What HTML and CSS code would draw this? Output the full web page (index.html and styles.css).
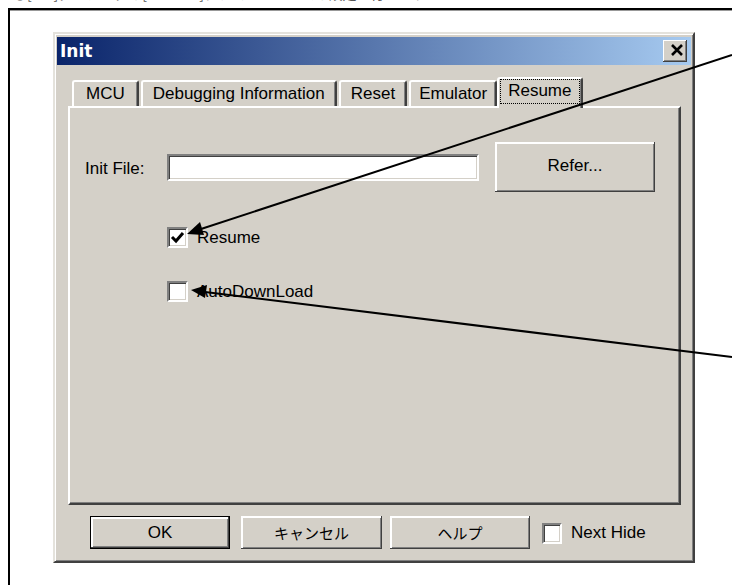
FILE: index.html
```html
<!DOCTYPE html>
<html lang="ja">
    <head>
        <meta charset="UTF-8" />
        <meta name="viewport" content="width=device-width, initial-scale=1.0" />
        <title>Init - Resume</title>
        <link rel="stylesheet" href="styles.css">
    </head>
    <body>
        <p class="caption">●[Init]ダイアログの[Resume]タブでレジュームの設定を行います</p>

        <div class="frame">
            <div class="dialog">
                <div class="titlebar">
                    <span class="title">Init</span>
                    <button class="close-btn" title="Close">
                        <svg width="24" height="22" viewBox="0 0 24 22">
                            <path d="M9 5 L19 15 M19 5 L9 15" stroke="#000" stroke-width="2.6" fill="none" />
                        </svg>
                    </button>
                </div>

                <div class="dialog-body">
                    <div class="tabs">
                        <div class="tab tab-mcu">MCU</div>
                        <div class="tab">Debugging Information</div>
                        <div class="tab">Reset</div>
                        <div class="tab tab-emu">Emulator</div>
                        <div class="tab active"><span class="focus">Resume</span></div>
                    </div>

                    <div class="panel">
                        <div class="file-row">
                            <label class="file-label" for="initFile">Init File:</label>
                            <input class="file-input" type="text" id="initFile" />
                            <button class="btn refer-btn">Refer...</button>
                        </div>

                        <label class="check-row first">
                            <span class="check">
                                <svg width="17" height="17" viewBox="0 0 17 17">
                                    <path d="M3 8 L7 12 L14 4" stroke="#000" stroke-width="3" fill="none" />
                                </svg>
                            </span>
                            Resume
                        </label>
                        <label class="check-row second">
                            <span class="check"></span>
                            AutoDownLoad
                        </label>
                    </div>

                    <div class="button-row">
                        <button class="btn default-btn">OK</button>
                        <button class="btn jp cancel-btn">キャンセル</button>
                        <button class="btn jp help-btn">ヘルプ</button>
                        <label class="check-row next-hide">
                            <span class="check small"></span>
                            Next Hide
                        </label>
                    </div>
                </div>
            </div>
        </div>

        <!-- callout arrows drawn over the dialog -->
        <svg class="callouts" width="732" height="585" viewBox="0 0 732 585">
            <line x1="732" y1="55" x2="201" y2="229" stroke="#000" stroke-width="2" />
            <polygon points="187,234 204,235 200,222" fill="#000" />
            <line x1="732" y1="357" x2="205" y2="292" stroke="#000" stroke-width="2" />
            <polygon points="191,290 207,285 205,298" fill="#000" />
        </svg>
    </body>
</html>
```

FILE: styles.css
```css
body {
    margin: 0;
    background-color: #fff;
    overflow: hidden;
    font-family: "Liberation Sans", "Noto Sans CJK JP", sans-serif;
    font-size: 17px;
    color: #000;
}

/* heading of the page, scrolled mostly out of view */
.caption {
    margin: -17px 0 0 13px;
    height: 20px;
    line-height: 20px;
    font-family: "Noto Sans CJK JP", sans-serif;
    font-size: 14px;
    color: #555;
    white-space: nowrap;
}

.frame {
    margin: 5px 0 0 8px;
    width: 760px;
    height: 620px;
    border: 2px solid #000;
    box-shadow: inset 0 1px #999;
    padding: 22px 0 0 43px;
}

.dialog {
    width: 642px;
    height: 531px;
    box-sizing: border-box;
    background-color: #d4d0c8;
    border: 2px solid;
    border-color: #e4e2dc #404040 #404040 #e4e2dc;
    box-shadow: inset 1px 1px #fff, inset -1px -1px #808080;
    padding: 3px 2px 2px;
    display: flex;
    flex-direction: column;
}

.titlebar {
    height: 28px;
    flex: none;
    display: flex;
    align-items: center;
    justify-content: space-between;
    padding: 0 4px 0 3px;
    background: linear-gradient(to right, #0a246a, #a6caf0);
}

.title {
    color: #fff;
    font-family: "DejaVu Sans", sans-serif;
    font-weight: bold;
    font-size: 17px;
}

.close-btn {
    width: 24px;
    height: 22px;
    padding: 0;
    border: none;
    background-color: #d4d0c8;
    box-shadow: inset -1px -1px #404040, inset 1px 1px #fff, inset -2px -2px #808080;
    display: flex;
}

.dialog-body {
    flex: 1;
    display: flex;
    flex-direction: column;
    padding: 12px 10px 10px 11px;
}

/* tab strip */
.tabs {
    height: 29px;
    flex: none;
    display: flex;
    align-items: flex-end;
    padding-left: 4px;
}

.tab {
    height: 26px;
    box-sizing: border-box;
    display: flex;
    align-items: center;
    padding: 0 10px;
    margin-right: 2px;
    border: 2px solid;
    border-bottom: none;
    border-color: #fff #404040 transparent #fff;
    border-radius: 3px 3px 0 0;
    box-shadow: inset -1px 0 #808080;
    white-space: nowrap;
}

.tab-mcu {
    padding: 0 12px;
}

.tab-emu {
    padding: 0 8px;
}

.tab.active {
    position: relative;
    height: 31px;
    margin: 0 0 -2px -2px;
    padding: 0 1px 4px;
    align-items: flex-end;
    background-color: #d4d0c8;
}

.focus {
    display: flex;
    align-items: center;
    height: 25px;
    box-sizing: border-box;
    padding: 0 7px 2px;
    border: 1px dotted #000;
}

.panel {
    flex: 1;
    border: 2px solid;
    border-color: #fff #404040 #404040 #fff;
    box-shadow: inset -1px -1px #808080;
    padding: 34px 0 0 15px;
}

.file-row {
    display: flex;
    align-items: center;
    height: 50px;
}

.file-label {
    width: 82px;
    padding-top: 4px;
}

.file-input {
    width: 312px;
    height: 27px;
    box-sizing: border-box;
    margin: 0 16px 0 0;
    padding: 0;
    border: 2px solid;
    border-color: #808080 #fff #fff #808080;
    box-shadow: inset 1px 1px #404040, inset -1px -1px #d4d0c8;
    background-color: #fff;
}

.btn {
    font: inherit;
    color: #000;
    background-color: #d4d0c8;
    border: none;
    padding: 0;
    box-shadow: inset -1px -1px #404040, inset 2px 2px #fff, inset -2px -2px #808080;
}

.refer-btn {
    width: 160px;
    height: 50px;
    padding-bottom: 2px;
}

/* checkboxes */
.check-row {
    display: flex;
    align-items: center;
    gap: 9px;
    height: 21px;
}

.check-row.first {
    margin: 35px 0 0 82px;
}

.check-row.second {
    margin: 33px 0 0 82px;
}

.check {
    width: 21px;
    height: 21px;
    box-sizing: border-box;
    display: flex;
    border: 2px solid;
    border-color: #808080 #fff #fff #808080;
    box-shadow: inset 1px 1px #404040, inset -1px -1px #d4d0c8;
    background-color: #fff;
}

.check.small {
    width: 20px;
}

/* bottom buttons */
.button-row {
    flex: none;
    display: flex;
    align-items: center;
    height: 33px;
    margin-top: 11px;
    padding-left: 22px;
}

.button-row .btn {
    height: 33px;
    width: 140px;
}

.default-btn {
    border: 1px solid #000;
}

.cancel-btn {
    margin-left: 11px;
    width: 141px !important;
}

.help-btn {
    margin-left: 8px;
}

.jp {
    font-family: "Noto Sans CJK JP", sans-serif;
    font-size: 15px;
}

.next-hide {
    margin-left: 12px;
    padding-top: 1px;
}

.callouts {
    position: absolute;
    top: 0;
    left: 0;
    pointer-events: none;
}
```
